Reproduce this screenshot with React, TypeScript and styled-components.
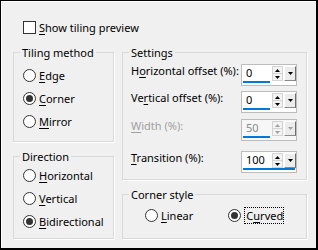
import React from "react";
import styled, { createGlobalStyle } from "styled-components";

const Global = createGlobalStyle`
  html, body { margin: 0; padding: 0; background: #f0f0f0; }
  body { font-family: "Noto Sans", "DejaVu Sans", sans-serif; font-size: 11px; color: #000; }
  * { box-sizing: border-box; }
`;

const Dialog = styled.div`
  width: 318px;
  height: 250px;
  background: #f0f0f0;
  border-style: solid;
  border-color: #000;
  border-width: 1px 2px 2px 1px;
  box-shadow: inset 1px 1px 0 #fff;
  padding: 20px 9px 0 12px;
  display: flex;
  flex-direction: column;
  gap: 12px;
`;

const CheckRow = styled.label`
  display: flex;
  align-items: center;
  gap: 3px;
  height: 13px;
  line-height: 13px;
  margin-left: 10px;
`;

const CheckBox = styled.span`
  width: 13px;
  height: 13px;
  flex: none;
  border: 1px solid #333;
  background: #fff;
`;

const Columns = styled.div`
  display: flex;
  gap: 8px;
`;

const Column = styled.div<{ $w: number }>`
  width: ${(p) => p.$w}px;
  display: flex;
  flex-direction: column;
  gap: 8px;
`;

const Group = styled.fieldset`
  margin: 0;
  padding: 0;
  min-width: 0;
  border: 1px solid #d9d9d9;
  box-shadow: 1px 1px 0 #fff;
`;

const Legend = styled.legend`
  margin-left: 6px;
  padding: 0 2px;
  line-height: 13px;
  font-size: 11px;
`;

const Body = styled.div<{ $pad: string }>`
  padding: ${(p) => p.$pad};
  display: flex;
  flex-direction: column;
`;

const InlineBody = styled.div<{ $pad: string; $gap: number }>`
  padding: ${(p) => p.$pad};
  display: flex;
  align-items: center;
  gap: ${(p) => p.$gap}px;
`;

const Option = styled.label`
  display: flex;
  align-items: center;
  gap: 3px;
  height: 23px;
  line-height: 13px;
  white-space: nowrap;
`;

const Radio = styled.span<{ $on?: boolean }>`
  width: 13px;
  height: 13px;
  flex: none;
  border-radius: 50%;
  border: 1px solid #333;
  background: #fff;
  display: flex;
  align-items: center;
  justify-content: center;
  &::after {
    content: "";
    width: 7px;
    height: 7px;
    border-radius: 50%;
    background: #333;
    display: ${(p) => (p.$on ? "block" : "none")};
  }
`;

const Key = styled.span`
  text-decoration: underline;
  text-decoration-thickness: 1px;
  text-underline-offset: 2px;
`;

const Focus = styled.span`
  border: 1px dotted #000;
  padding: 1px 0 1px 1px;
  line-height: 13px;
`;

const SettingRow = styled.div<{ $mt: number }>`
  display: flex;
  justify-content: space-between;
  align-items: flex-start;
  margin-top: ${(p) => p.$mt}px;
`;

const Label = styled.span<{ $disabled?: boolean }>`
  line-height: 13px;
  color: ${(p) => (p.$disabled ? "#a0a0a0" : "#000")};
  white-space: nowrap;
`;

const Spin = styled.div<{ $disabled?: boolean }>`
  width: 56px;
  height: 22px;
  border: 1px solid #bcbcbc;
  background: ${(p) => (p.$disabled ? "#f7f7f7" : "#fff")};
  display: flex;
  flex-direction: column;
`;

const SpinTop = styled.div`
  display: flex;
  height: 16px;
`;

const Field = styled.div<{ $disabled?: boolean }>`
  width: 30px;
  padding-left: 4px;
  line-height: 16px;
  color: ${(p) => (p.$disabled ? "#8a8a8a" : "#000")};
`;

const UpDown = styled.div`
  width: 11px;
  display: flex;
  flex-direction: column;
  margin-top: 1px;
  border: 1px solid #d4d4d4;
  background: #f3f3f3;
`;

const Half = styled.div<{ $top?: boolean }>`
  flex: 1;
  display: flex;
  align-items: center;
  justify-content: center;
  border-bottom: ${(p) => (p.$top ? "1px solid #d4d4d4" : "none")};
`;

const Drop = styled.div`
  width: 12px;
  margin-left: 1px;
  margin-top: 1px;
  display: flex;
  align-items: center;
  justify-content: center;
  background: #ececec;
  border-top: 1px solid #fff;
  border-left: 1px solid #fff;
  border-right: 1px solid #6e6e6e;
  border-bottom: 1px solid #8a8a8a;
`;

const Underline = styled.div<{ $full?: boolean }>`
  height: 2px;
  width: ${(p) => (p.$full ? "auto" : "27px")};
  margin-left: 1px;
  margin-right: ${(p) => (p.$full ? "1px" : "0")};
  background: #0078d7;
`;

const Tri = ({ up, color }: { up?: boolean; color: string }) => (
  <svg width="5" height="3" viewBox="0 0 5 3" style={{ display: "block" }}>
    <polygon points={up ? "0,3 2.5,0 5,3" : "0,0 5,0 2.5,3"} fill={color} />
  </svg>
);

const SpinBox = ({
  value,
  disabled,
  focused,
}: {
  value: string;
  disabled?: boolean;
  focused?: boolean;
}) => {
  const c = disabled ? "#a0a0a0" : "#000";
  return (
    <Spin $disabled={disabled}>
      <SpinTop>
        <Field $disabled={disabled}>{value}</Field>
        <UpDown>
          <Half $top>
            <Tri up color={c} />
          </Half>
          <Half>
            <Tri color={c} />
          </Half>
        </UpDown>
        <Drop>
          <Tri color={c} />
        </Drop>
      </SpinTop>
      <Underline $full={focused} />
    </Spin>
  );
};

export default function App() {
  return (
    <>
      <Global />
      <Dialog>
        <CheckRow>
          <CheckBox />
          <span>
            <Key>S</Key>how tiling preview
          </span>
        </CheckRow>
        <Columns>
          <Column $w={101}>
            <Group>
              <Legend>Tiling method</Legend>
              <Body $pad="5px 0 8px 9px">
                <Option>
                  <Radio />
                  <span>
                    <Key>E</Key>dge
                  </span>
                </Option>
                <Option>
                  <Radio $on />
                  <span>
                    <Key>C</Key>orner
                  </span>
                </Option>
                <Option>
                  <Radio />
                  <span>
                    <Key>M</Key>irror
                  </span>
                </Option>
              </Body>
            </Group>
            <Group>
              <Legend>Direction</Legend>
              <Body $pad="1px 0 5px 9px">
                <Option>
                  <Radio />
                  <span>
                    <Key>H</Key>orizontal
                  </span>
                </Option>
                <Option>
                  <Radio />
                  <span>
                    <Key>V</Key>ertical
                  </span>
                </Option>
                <Option>
                  <Radio $on />
                  <span>
                    <Key>B</Key>idirectional
                  </span>
                </Option>
              </Body>
            </Group>
          </Column>
          <Column $w={185}>
            <Group>
              <Legend>Settings</Legend>
              <Body $pad="5px 9px 6px 8px">
                <SettingRow $mt={0}>
                  <Label>
                    H<Key>o</Key>rizontal offset (%):
                  </Label>
                  <SpinBox value="0" />
                </SettingRow>
                <SettingRow $mt={5}>
                  <Label>
                    Ve<Key>r</Key>tical offset (%):
                  </Label>
                  <SpinBox value="0" />
                </SettingRow>
                <SettingRow $mt={6}>
                  <Label $disabled>
                    <Key>W</Key>idth (%):
                  </Label>
                  <SpinBox value="50" disabled />
                </SettingRow>
                <SettingRow $mt={10}>
                  <Label>
                    <Key>T</Key>ransition (%):
                  </Label>
                  <SpinBox value="100" focused />
                </SettingRow>
              </Body>
            </Group>
            <Group>
              <Legend>Corner style</Legend>
              <InlineBody $pad="3px 0 11px 22px" $gap={35}>
                <Option>
                  <Radio />
                  <span>
                    <Key>L</Key>inear
                  </span>
                </Option>
                <Option>
                  <Radio $on />
                  <Focus>
                    C<Key>u</Key>rved
                  </Focus>
                </Option>
              </InlineBody>
            </Group>
          </Column>
        </Columns>
      </Dialog>
    </>
  );
}
